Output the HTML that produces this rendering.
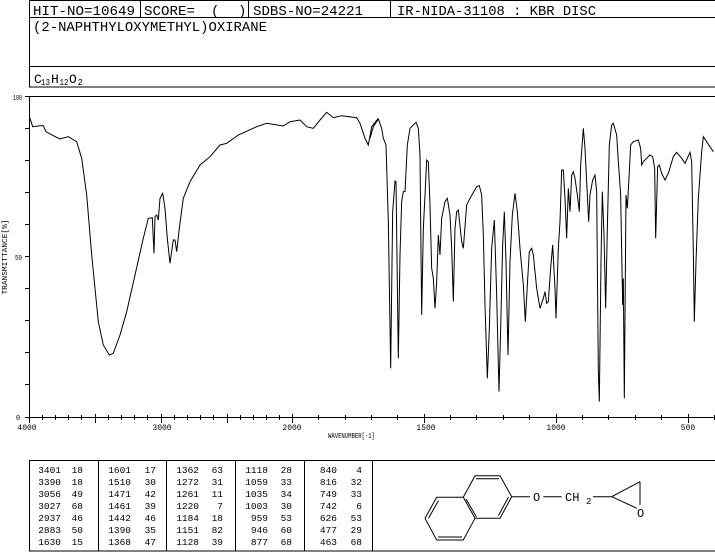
<!DOCTYPE html>
<html><head><meta charset="utf-8"><style>
html,body{margin:0;padding:0;background:#fff;}
svg{display:block;}
text{font-family:"Liberation Mono",monospace;fill:#000;}
</style></head><body>
<svg width="715" height="553" viewBox="0 0 715 553" xmlns="http://www.w3.org/2000/svg">
<g stroke="#000" stroke-width="1" fill="none">
<rect x="29.5" y="0.5" width="700" height="86.5"/>
<line x1="29" y1="17.5" x2="715" y2="17.5"/>
<line x1="29" y1="66.5" x2="715" y2="66.5"/>
<line x1="140.5" y1="0" x2="140.5" y2="17"/>
<line x1="248.5" y1="0" x2="248.5" y2="17"/>
<line x1="390.5" y1="0" x2="390.5" y2="17"/>
</g>
<text x="33" y="15" font-size="14" textLength="102" lengthAdjust="spacingAndGlyphs">HIT-NO=10649</text>
<text x="144" y="15" font-size="14" textLength="51" lengthAdjust="spacingAndGlyphs">SCORE=</text>
<text x="211" y="15" font-size="14">(</text>
<text x="238" y="15" font-size="14">)</text>
<text x="253" y="15" font-size="14" textLength="110" lengthAdjust="spacingAndGlyphs">SDBS-NO=24221</text>
<text x="397" y="15" font-size="14" textLength="199" lengthAdjust="spacingAndGlyphs">IR-NIDA-31108 : KBR DISC</text>
<text x="33" y="31" font-size="14" textLength="234" lengthAdjust="spacingAndGlyphs">(2-NAPHTHYLOXYMETHYL)OXIRANE</text>
<text x="34" y="83" font-size="13">C</text>
<text x="41" y="85" font-size="9" textLength="9" lengthAdjust="spacingAndGlyphs">13</text>
<text x="51" y="83" font-size="13">H</text>
<text x="59.5" y="85" font-size="9" textLength="9" lengthAdjust="spacingAndGlyphs">12</text>
<text x="69" y="83" font-size="13">O</text>
<text x="77.5" y="85" font-size="9">2</text>

<g stroke="#000" stroke-width="1" fill="none">
<line x1="29" y1="96.5" x2="715" y2="96.5"/>
<line x1="29.5" y1="96" x2="29.5" y2="417"/>
<line x1="29" y1="417.5" x2="715" y2="417.5"/>
<path d="M25 96.5H29M25 128.5H29M25 160.5H29M25 192.5H29M25 224.5H29M25 256.5H29M25 288.5H29M25 320.5H29M25 352.5H29M25 384.5H29M25 417.5H29"/>
<path d="M29.5 414V423M42.5 415V420M55.5 415V420M68.5 415V420M81.5 415V420M95.5 414V423M108.5 415V420M121.5 415V420M134.5 415V420M147.5 415V420M161.5 414V423M174.5 415V420M187.5 415V420M200.5 415V420M213.5 415V420M227.5 414V423M240.5 415V420M253.5 415V420M266.5 415V420M279.5 415V420M292.5 414V423M318.5 415V420M345.5 415V420M371.5 415V420M397.5 415V420M424.5 414V423M450.5 415V420M476.5 415V420M503.5 415V420M529.5 415V420M556.5 414V423M582.5 415V420M608.5 415V420M635.5 415V420M661.5 415V420M688.5 414V423M714.5 415V420"/>
</g>
<text x="13" y="100" font-size="7" textLength="9" lengthAdjust="spacingAndGlyphs">100</text>
<text x="15" y="260" font-size="7" textLength="7" lengthAdjust="spacingAndGlyphs">50</text>
<text x="16" y="420" font-size="7">0</text>
<text transform="translate(7,257) rotate(-90)" text-anchor="middle" font-size="7" textLength="75" lengthAdjust="spacingAndGlyphs">TRANSMITTANCE[%]</text>
<g font-size="8" text-anchor="middle">
<text x="27" y="430">4000</text><text x="162" y="430">3000</text><text x="292" y="430">2000</text><text x="426" y="430">1500</text><text x="556" y="430">1000</text><text x="688" y="430">500</text>
</g>
<text x="328" y="438" font-size="7" textLength="47" lengthAdjust="spacingAndGlyphs">WAVENUMBER[-1]</text>

<g fill="none" stroke="#000" stroke-width="1">
<polyline points="30,118.3 32.7,126.7 40,125.7 43.3,125.7 46,131.7 53.3,135.7 60,139 68.3,136.7 76.7,141.7 81.7,158.3 86.7,195 91.7,255 98.3,321.7 103.3,345 109.3,355 113.3,353.3 120,335 126.7,311.7 135,275 143.3,238.3 148.3,218.3 152.3,217.7 154,253.3 155,216.7 156.7,215 158.3,220 160,198.3 162.7,193.3 165,208.3 167.3,238.3 170,263.3 173.3,240 175,240 176.7,251.7 179.3,228.3 183.3,198.3 190,181.7 200,165 210,156.7 220,145 226.7,143.3 238.3,135 256.7,126.7 266.7,123.3 283.3,126 290,121.7 300,120 306.7,126.7 313.3,128.3 320,120 326.7,112.3 333.3,117.7 341.7,115.7 356.7,117.7 360,123.3 365,138.3 368.3,145 371.7,126.7 378.3,118.3"/>
<polyline transform="translate(370,95) scale(0.33333)" stroke-width="3" points="0,130 10,95 25,72 35,100 40,130 48,150 55,380 62,820 68,350 75,258 78,260 85,790 90,480 95,320 100,290 105,290 112,150 120,100 138,82 145,100 150,180 155,660 160,400 165,300 170,195 175,200 180,330 185,520 190,550 195,640 200,560 205,420 210,480 215,370 225,320 232,310 240,360 245,460 250,620 255,400 260,350 265,345 275,440 280,460 290,330 300,310 320,275 328,272 335,300 340,420 345,630 352,850 358,700 365,460 373,375 380,600 387,890 392,700 398,450 403,350 408,500 414,780 420,500 427,360 435,295 442,350 450,460 460,570 466,680 472,570 478,470 485,460 490,480 500,580 510,640 520,610 525,590 530,625 535,620 542,520 548,450 555,580 558,670 565,460 570,380 575,225 580,225 585,310 590,430 595,280 600,350 605,240 610,230 615,250 622,300 628,350 632,210 640,100 645,160 650,260 656,380 660,300 668,255 675,240 680,290 685,830 688,920 693,500 697,290 702,420 707,640 712,400 718,150 725,90 730,85 740,120 745,200 752,300 758,630 760,550 763,910 768,300 772,340 778,230 782,150 790,140 805,135 812,160 815,210 820,200 830,190 840,180 848,185 854,220 857,430 863,215 868,210 875,235 885,255 895,235 910,185 920,172 935,190 945,205 960,172 965,200 970,470 973,680 978,500 985,310 995,170 1000,125 1010,140 1030,170"/>
</g>

<g stroke="#000" stroke-width="1" fill="none">
<rect x="29.5" y="460.5" width="700" height="90.5"/>
<line x1="98.5" y1="460" x2="98.5" y2="551"/>
<line x1="166.5" y1="460" x2="166.5" y2="551"/>
<line x1="235.5" y1="460" x2="235.5" y2="551"/>
<line x1="304.5" y1="460" x2="304.5" y2="551"/>
<line x1="372.5" y1="460" x2="372.5" y2="551"/>
</g>
<g font-size="9.5" text-anchor="end">
<text x="61" y="473">3401</text><text x="83" y="473">18</text>
<text x="61" y="485">3390</text><text x="83" y="485">18</text>
<text x="61" y="497">3056</text><text x="83" y="497">49</text>
<text x="61" y="509">3027</text><text x="83" y="509">68</text>
<text x="61" y="521">2937</text><text x="83" y="521">46</text>
<text x="61" y="533">2883</text><text x="83" y="533">50</text>
<text x="61" y="545">1630</text><text x="83" y="545">15</text>
<text x="131" y="473">1601</text><text x="156" y="473">17</text>
<text x="131" y="485">1510</text><text x="156" y="485">30</text>
<text x="131" y="497">1471</text><text x="156" y="497">42</text>
<text x="131" y="509">1461</text><text x="156" y="509">39</text>
<text x="131" y="521">1442</text><text x="156" y="521">46</text>
<text x="131" y="533">1390</text><text x="156" y="533">35</text>
<text x="131" y="545">1368</text><text x="156" y="545">47</text>
<text x="199" y="473">1362</text><text x="223" y="473">63</text>
<text x="199" y="485">1272</text><text x="223" y="485">31</text>
<text x="199" y="497">1261</text><text x="223" y="497">11</text>
<text x="199" y="509">1220</text><text x="223" y="509">7</text>
<text x="199" y="521">1184</text><text x="223" y="521">18</text>
<text x="199" y="533">1151</text><text x="223" y="533">82</text>
<text x="199" y="545">1128</text><text x="223" y="545">39</text>
<text x="268" y="473">1118</text><text x="292" y="473">28</text>
<text x="268" y="485">1059</text><text x="292" y="485">33</text>
<text x="268" y="497">1035</text><text x="292" y="497">34</text>
<text x="268" y="509">1003</text><text x="292" y="509">30</text>
<text x="268" y="521">959</text><text x="292" y="521">53</text>
<text x="268" y="533">946</text><text x="292" y="533">60</text>
<text x="268" y="545">877</text><text x="292" y="545">68</text>
<text x="337" y="473">840</text><text x="362" y="473">4</text>
<text x="337" y="485">816</text><text x="362" y="485">32</text>
<text x="337" y="497">749</text><text x="362" y="497">33</text>
<text x="337" y="509">742</text><text x="362" y="509">6</text>
<text x="337" y="521">626</text><text x="362" y="521">53</text>
<text x="337" y="533">477</text><text x="362" y="533">29</text>
<text x="337" y="545">463</text><text x="362" y="545">68</text>
</g>

<g stroke="#000" stroke-width="1" fill="none">
<polygon points="436.7,497.3 463.3,497.3 475,518.3 463.3,540 436.7,540 425,518.3"/>
<polyline points="463.3,497.3 475,475.7 500,475.7 511.7,496.7 500,518.3 475,518.3"/>
<line x1="438.5" y1="500.5" x2="428.5" y2="518.3"/>
<line x1="438" y1="537" x2="462" y2="537"/>
<line x1="466" y1="499" x2="476.5" y2="517"/>
<line x1="476" y1="478.7" x2="499" y2="478.7"/>
<line x1="498.5" y1="515.5" x2="508.5" y2="497"/>
<line x1="511.7" y1="496.7" x2="530" y2="496.7"/>
<line x1="543.3" y1="496.7" x2="561.7" y2="496.7"/>
<line x1="593" y1="496.7" x2="611.7" y2="496.7"/>
<line x1="611.7" y1="496.7" x2="640" y2="481.7"/>
<line x1="640" y1="481.7" x2="640" y2="505"/>
<line x1="611.7" y1="496.7" x2="636.7" y2="508.3"/>
</g>
<g font-family="Liberation Sans, sans-serif" font-size="12">
<text x="533" y="501">O</text>
<text x="565" y="501">CH</text>
<text x="586" y="504" font-size="9">2</text>
<text x="637" y="517">O</text>
</g>
</svg>
</body></html>
